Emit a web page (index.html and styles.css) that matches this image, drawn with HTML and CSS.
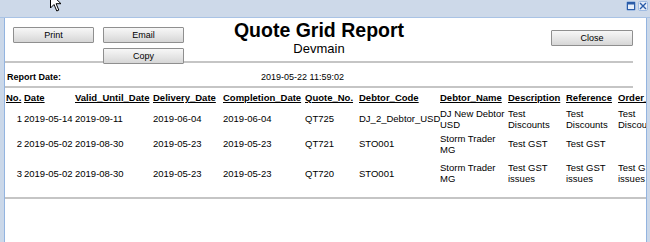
FILE: index.html
```html
<!DOCTYPE html>
<html>
<head>
<meta charset="utf-8">
<title>Quote Grid Report</title>
<link rel="stylesheet" href="styles.css">
</head>
<body>
<div class="window">
  <div class="titlebar">
    <span class="tb-btn">
      <svg width="8" height="8" viewBox="0 0 8 8"><rect x="0.5" y="0.5" width="7" height="7" fill="none" stroke="#2b5ca8"/><rect x="0.5" y="0.5" width="7" height="2" fill="#2b5ca8"/></svg>
    </span>
    <span class="tb-btn">
      <svg width="8" height="8" viewBox="0 0 8 8"><path d="M1 1 L7 7 M7 1 L1 7" stroke="#2b5ca8" stroke-width="1.4" fill="none"/></svg>
    </span>
  </div>
  <div class="frame-body">
    <div class="content">
      <div class="report">
        <div class="head">
          <div class="actions">
            <div class="btn-col"><button class="btn">Print</button></div>
            <div class="btn-col"><button class="btn">Email</button><button class="btn">Copy</button></div>
          </div>
          <div class="title">
            <h1 class="title-main">Quote Grid Report</h1>
            <div class="title-sub">Devmain</div>
          </div>
          <div class="close-wrap"><button class="btn btn-close">Close</button></div>
        </div>
        <div class="meta"><span class="meta-label">Report Date:</span><span class="meta-value">2019-05-22 11:59:02</span></div>
      </div>
      <table class="grid">
        <colgroup>
          <col class="c-no"><col class="c-date"><col class="c-valid"><col class="c-deliv"><col class="c-comp"><col class="c-quote"><col class="c-code"><col class="c-name"><col class="c-desc"><col class="c-ref"><col class="c-order"><col class="c-extra">
        </colgroup>
        <thead>
          <tr>
            <th>No.</th><th>Date</th><th>Valid_Until_Date</th><th>Delivery_Date</th><th>Completion_Date</th><th>Quote_No.</th><th>Debtor_Code</th><th>Debtor_Name</th><th>Description</th><th>Reference</th><th>Order_No.</th><th>Contact</th>
          </tr>
        </thead>
        <tbody>
          <tr class="r1">
            <td class="num">1</td><td>2019-05-14</td><td>2019-09-11</td><td>2019-06-04</td><td>2019-06-04</td><td>QT725</td><td>DJ_2_Debtor_USD</td><td class="wrap">DJ New Debtor USD</td><td class="wrap">Test Discounts</td><td class="wrap">Test Discounts</td><td class="wrap">Test Discounts</td><td></td>
          </tr>
          <tr class="r2">
            <td class="num">2</td><td>2019-05-02</td><td>2019-08-30</td><td>2019-05-23</td><td>2019-05-23</td><td>QT721</td><td>STO001</td><td class="wrap">Storm Trader MG</td><td class="wrap">Test GST</td><td class="wrap">Test GST</td><td class="wrap"></td><td></td>
          </tr>
          <tr class="r3">
            <td class="num">3</td><td>2019-05-02</td><td>2019-08-30</td><td>2019-05-23</td><td>2019-05-23</td><td>QT720</td><td>STO001</td><td class="wrap">Storm Trader MG</td><td class="wrap">Test GST issues</td><td class="wrap">Test GST issues</td><td class="wrap">Test GST issues</td><td></td>
          </tr>
        </tbody>
      </table>
      <div class="bottom-rule"></div>
    </div>
  </div>
  <svg class="cursor" width="12" height="19" viewBox="0 0 12 19"><path d="M0.5 0.5 L0.5 15 L4 11.5 L6.8 18 L8.8 17.1 L6.1 10.7 L11 10.7 Z" fill="#fff" stroke="#000" stroke-width="1"/></svg>
</div>
</body>
</html>
```
FILE: styles.css
```css
html, body {
  margin: 0;
  padding: 0;
  background: #ffffff;
}

body {
  font-family: "Liberation Sans", Arial, sans-serif;
  color: #000;
}

.window {
  position: relative;
  width: 650px;
  height: 242px;
  background: #cbd8e9;
  overflow: hidden;
  display: flex;
  flex-direction: column;
}

.titlebar {
  height: 17px;
  border-bottom: 1px solid #a9c3e5;
  background: #cdd9e9;
  display: flex;
  justify-content: flex-end;
  align-items: flex-start;
  gap: 2px;
  padding-right: 2px;
  flex: none;
}

.tb-btn {
  margin-top: 1px;
  width: 10px;
  height: 10px;
  box-sizing: border-box;
  border: 1px solid #9fbbe2;
  border-radius: 2px;
  background: #e6eef9;
  display: flex;
  align-items: center;
  justify-content: center;
}

.frame-body {
  flex: 1;
  display: flex;
  padding-left: 4px;
  padding-right: 3px;
  min-height: 0;
}

.content {
  flex: 1;
  background: #fff;
  border-left: 1px solid #93b4e0;
  border-right: 1px solid #93b4e0;
  overflow: hidden;
  min-width: 0;
}

.report {
  width: 628px;
}

.head {
  height: 43px;
  border-bottom: 2px solid #c5c5c5;
  display: grid;
  grid-template-columns: 1fr auto 1fr;
}

.actions {
  display: flex;
  gap: 9px;
  padding-left: 8px;
  padding-top: 9px;
  align-items: flex-start;
}

.btn-col {
  display: flex;
  flex-direction: column;
  gap: 5px;
}

.btn {
  position: relative;
  z-index: 1;
  width: 81px;
  height: 16px;
  box-sizing: border-box;
  margin: 0;
  padding: 0;
  border: 1px solid #8f8f8f;
  border-radius: 1px;
  background: linear-gradient(#f7f7f7, #e4e4e4 60%, #d6d6d6);
  font-family: "Liberation Sans", Arial, sans-serif;
  font-size: 9px;
  line-height: 14px;
  color: #000;
  text-align: center;
}

.close-wrap {
  justify-self: end;
  padding-top: 9px;
}

.btn-close {
  width: 82px;
}

.title {
  text-align: center;
  padding-top: 2px;
}

.title-main {
  margin: 0;
  font-size: 19.5px;
  line-height: 21px;
  font-weight: 700;
}

.title-sub {
  font-size: 13px;
  line-height: 15px;
}

.meta {
  height: 25px;
  box-sizing: border-box;
  padding: 9px 0 0 2px;
  border-bottom: 2px solid #c5c5c5;
  font-size: 9px;
  line-height: 11px;
  display: flex;
}

.meta-label {
  width: 254px;
  font-weight: 700;
  flex: none;
}

.grid {
  margin-top: 4px;
  border-collapse: collapse;
  border-spacing: 0;
  table-layout: fixed;
  width: 750px;
  font-size: 9.5px;
  line-height: 11px;
}

.c-no { width: 18px; }
.c-date { width: 51px; }
.c-valid { width: 78px; }
.c-deliv { width: 70px; }
.c-comp { width: 82px; }
.c-quote { width: 54px; }
.c-code { width: 81px; }
.c-name { width: 68px; }
.c-desc { width: 58px; }
.c-ref { width: 52px; }
.c-order { width: 58px; }
.c-extra { width: 80px; }

.grid th {
  padding: 0 1px 3px 1px;
  text-align: left;
  font-weight: 700;
  text-decoration: underline;
  white-space: nowrap;
  vertical-align: bottom;
  overflow: visible;
}

.grid td {
  padding: 0 1px;
  vertical-align: middle;
  text-align: left;
  white-space: nowrap;
}

.grid td.wrap {
  white-space: normal;
}

.grid td.num {
  text-align: right;
}

.r1 { height: 25px; }
.r2 { height: 25px; }
.r3 { height: 34px; }

.bottom-rule {
  margin-top: 7px;
  height: 2px;
  background: #c5c5c5;
}

.cursor {
  position: absolute;
  left: 50px;
  top: -7px;
}
```
